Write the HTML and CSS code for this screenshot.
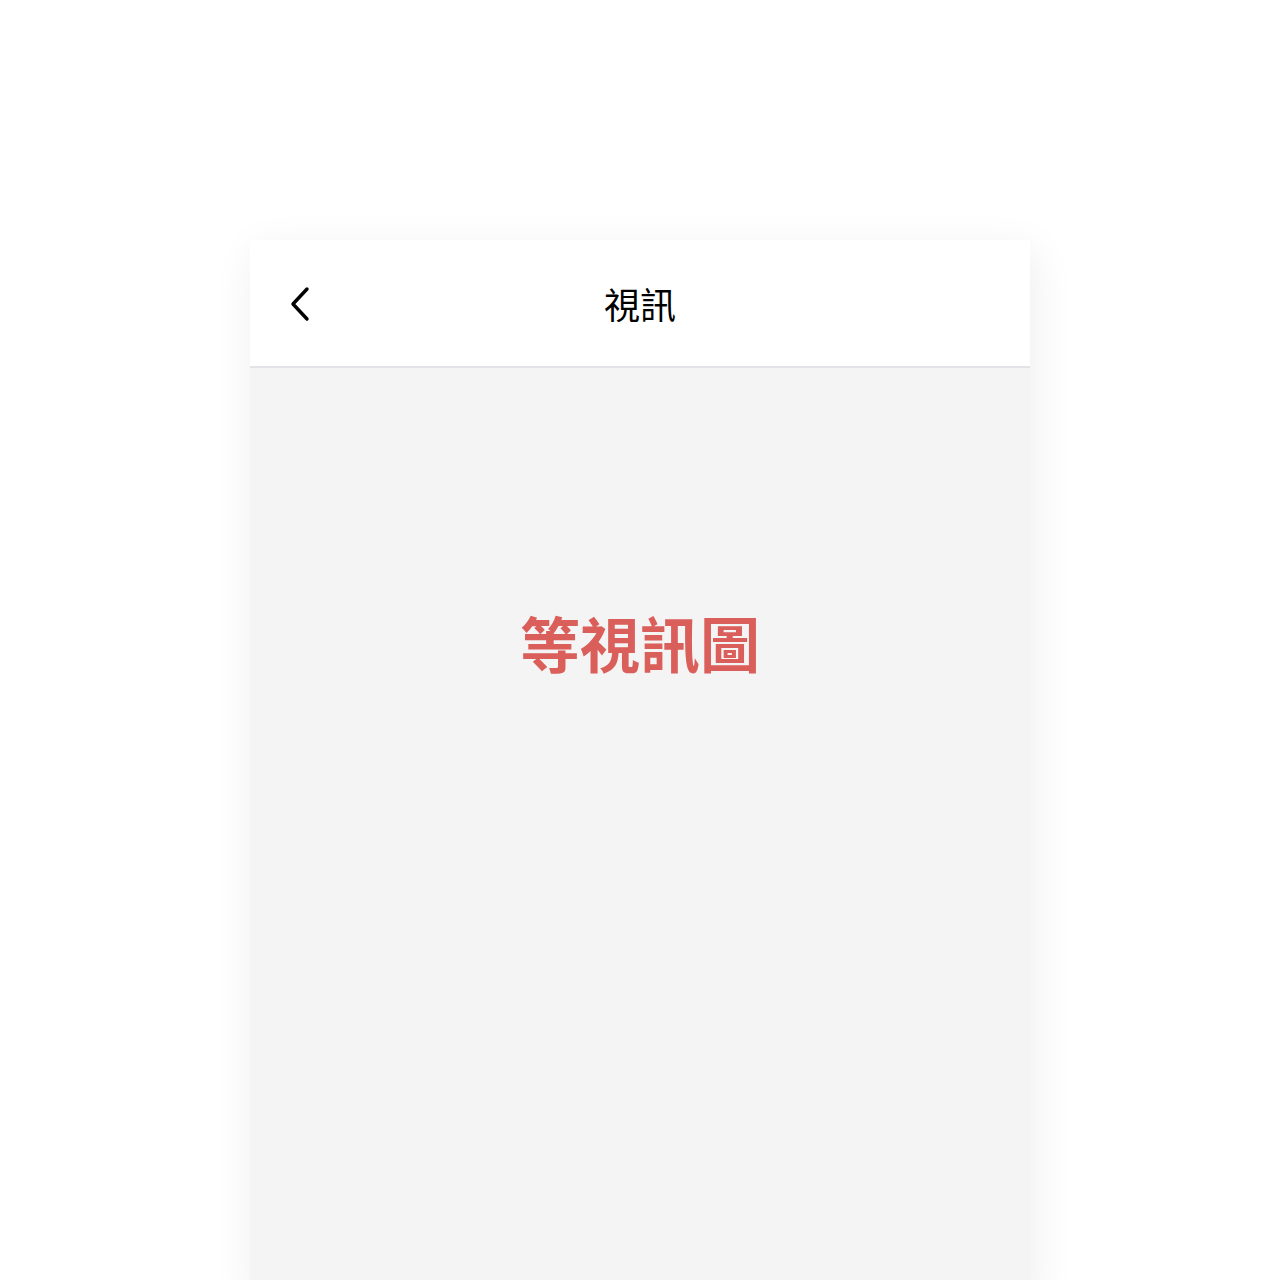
FILE: index.html
```html
<!DOCTYPE html>
<html lang="zh-Hant">
<head>
<meta charset="utf-8">
<link rel="stylesheet" href="styles.css">
</head>
<body>
<div class="stage">
  <div class="phone">
    <header class="nav">
      <span class="back">
        <svg width="24" height="36" viewBox="0 0 24 36"><path d="M19 3 L5 18 L19 33" fill="none" stroke="#000" stroke-width="3.4" stroke-linecap="round" stroke-linejoin="round"/></svg>
      </span>
      <h1 class="title">視訊</h1>
    </header>
    <main class="content">
      <p class="waiting">等視訊圖</p>
    </main>
  </div>
</div>
</body>
</html>
```
FILE: styles.css
```css
html, body { margin: 0; padding: 0; background: #fff; }
body { font-family: "Noto Sans CJK TC", "Noto Sans", sans-serif; }
.stage { height: 1280px; overflow: hidden; display: flex; justify-content: center; padding-top: 240px; box-sizing: border-box; }
.phone { width: 780px; height: 1060px; background: #f4f4f4; box-shadow: 4px 10px 40px rgba(0,0,0,0.07); display: flex; flex-direction: column; }
.nav { height: 126px; background: #fff; border-bottom: 2px solid #e1e3e8; position: relative; display: flex; align-items: center; justify-content: center; flex-shrink: 0; }
.back { position: absolute; left: 38px; top: 46px; display: flex; }
.title { margin: 0; font-size: 36px; font-weight: 400; color: #000; line-height: 1; }
.content { flex: 1; display: flex; justify-content: center; padding-top: 234px; }
.waiting { margin: 0; font-size: 60px; font-weight: 700; color: #da5f5b; line-height: 80px; height: 80px; }
```
